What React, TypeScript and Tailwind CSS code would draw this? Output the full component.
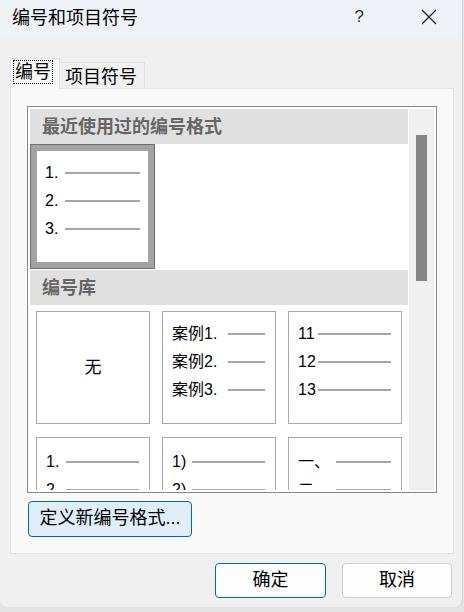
import React from 'react';

const ui = { fontFamily: '"Liberation Sans", "Noto Sans CJK SC", sans-serif' };

type LineProps = { label: string; labelW: string };

const ListLine: React.FC<LineProps> = ({ label, labelW }) => (
    <div className="flex items-center h-[28px]">
        <span className={`${labelW} shrink-0 text-[16px] leading-none text-black whitespace-nowrap`}>{label}</span>
        <div className="flex-1 h-[2px] bg-[#a5a5a5]"></div>
    </div>
);

const Cell: React.FC<{ children?: React.ReactNode; className?: string }> = ({ children, className = '' }) => (
    <div className={`w-[114px] h-[113px] shrink-0 border border-[#a8a8a8] bg-white ${className}`}>{children}</div>
);

export default function App() {
    return (
        <div className="w-[464px] h-[612px] bg-[#e4e4e4] overflow-hidden" style={ui}>
            <div className="w-[463px] h-[607px] bg-[#f0f0f0] rounded-b-[8px] border-r border-[#d6d6d6] flex flex-col">
                {/* Title bar */}
                <div className="h-[37px] bg-[#eef2f6] flex items-center shrink-0">
                    <span className="pl-[12px] text-[18px] text-black leading-none pb-[2px]">编号和项目符号</span>
                    <span className="ml-auto text-[17px] text-[#333] leading-none pb-[4px]">?</span>
                    <svg className="ml-[57px] mr-[25px] mb-[4px]" width="16" height="16" viewBox="0 0 16 16" fill="none" stroke="#222" strokeWidth="1.3">
                        <path d="M1 1l14 14M15 1L1 15" />
                    </svg>
                </div>

                {/* Tabs */}
                <div className="flex items-end pl-[10px] mt-[20px] h-[31px] shrink-0">
                    <div className="h-[31px] w-[50px] bg-[#f9f9f9] border-t border-l border-r border-[#e3e3e3] flex items-start pt-[1px] pl-[2px] relative z-10 -mb-[1px]">
                        <span className="text-[18px] leading-[22px] px-[1px] border border-dotted border-black text-black">编号</span>
                    </div>
                    <div className="h-[26px] w-[85px] bg-[#f0f0f0] border-t border-r border-[#e0e0e0] flex items-center pl-[5px]">
                        <span className="text-[18px] leading-none pt-[2px] text-black">项目符号</span>
                    </div>
                </div>

                {/* Panel */}
                <div className="ml-[10px] w-[444px] h-[466px] bg-[#f9f9f9] border border-[#e3e3e3] pt-[17px] pl-[16px] flex flex-col">
                    <div className="w-[410px] h-[387px] border border-[#828790] bg-white p-[2px] flex">
                        <div className="flex-1 overflow-hidden">
                            <div className="h-[35px] bg-[#e0e0e0] flex items-center pl-[12px]">
                                <span className="text-[18px] font-bold text-[#666] leading-none">最近使用过的编号格式</span>
                            </div>
                            <div className="h-[125px]">
                                <div className="w-[125px] h-[125px] border border-[#6e6e6e] bg-[#a3a3a3] p-[6px]">
                                    <div className="w-full h-full bg-white pt-[8px] pl-[8px] pr-[8px]">
                                        <ListLine label="1." labelW="w-[20px]" />
                                        <ListLine label="2." labelW="w-[20px]" />
                                        <ListLine label="3." labelW="w-[20px]" />
                                    </div>
                                </div>
                            </div>
                            <div className="h-[35px] mt-[1px] bg-[#e0e0e0] flex items-center pl-[12px]">
                                <span className="text-[18px] font-bold text-[#666] leading-none">编号库</span>
                            </div>
                            <div className="pt-[6px] pl-[6px] grid grid-cols-[114px_114px_114px] gap-x-[12px] gap-y-[13px]">
                                <Cell className="flex items-center justify-center">
                                    <span className="text-[17px] leading-none text-black">无</span>
                                </Cell>
                                <Cell className="pt-[8px] pl-[9px] pr-[10px]">
                                    <ListLine label="案例1." labelW="w-[56px]" />
                                    <ListLine label="案例2." labelW="w-[56px]" />
                                    <ListLine label="案例3." labelW="w-[56px]" />
                                </Cell>
                                <Cell className="pt-[8px] pl-[9px] pr-[10px]">
                                    <ListLine label="11" labelW="w-[20px]" />
                                    <ListLine label="12" labelW="w-[20px]" />
                                    <ListLine label="13" labelW="w-[20px]" />
                                </Cell>
                                <Cell className="pt-[10px] pl-[9px] pr-[10px]">
                                    <ListLine label="1." labelW="w-[20px]" />
                                    <ListLine label="2." labelW="w-[20px]" />
                                    <ListLine label="3." labelW="w-[20px]" />
                                </Cell>
                                <Cell className="pt-[10px] pl-[9px] pr-[10px]">
                                    <ListLine label="1)" labelW="w-[20px]" />
                                    <ListLine label="2)" labelW="w-[20px]" />
                                    <ListLine label="3)" labelW="w-[20px]" />
                                </Cell>
                                <Cell className="pt-[10px] pl-[9px] pr-[10px]">
                                    <ListLine label="一、" labelW="w-[38px]" />
                                    <ListLine label="二、" labelW="w-[38px]" />
                                    <ListLine label="三、" labelW="w-[38px]" />
                                </Cell>
                            </div>
                        </div>
                        {/* Scrollbar */}
                        <div className="w-[25px] ml-[1px] bg-[#f0f0f0] pt-[26px] flex justify-center">
                            <div className="w-[11px] h-[146px] bg-[#858585]"></div>
                        </div>
                    </div>

                    <button className="mt-[8px] ml-[1px] w-[164px] h-[36px] rounded-[4px] border border-[#0067c0] bg-[#e0eef9] text-[18px] text-black leading-none pb-[2px]">
                        定义新编号格式...
                    </button>
                </div>

                {/* Footer */}
                <div className="flex justify-end gap-[16px] pr-[10px] mt-[9px]">
                    <button className="w-[111px] h-[35px] rounded-[4px] border border-[#0067c0] bg-[#fdfdfd] text-[18px] leading-none text-black pb-[2px]">确定</button>
                    <button className="w-[110px] h-[35px] rounded-[4px] border border-[#d0d0d0] bg-[#fdfdfd] text-[18px] leading-none text-black pb-[2px]">取消</button>
                </div>
            </div>
        </div>
    );
}
